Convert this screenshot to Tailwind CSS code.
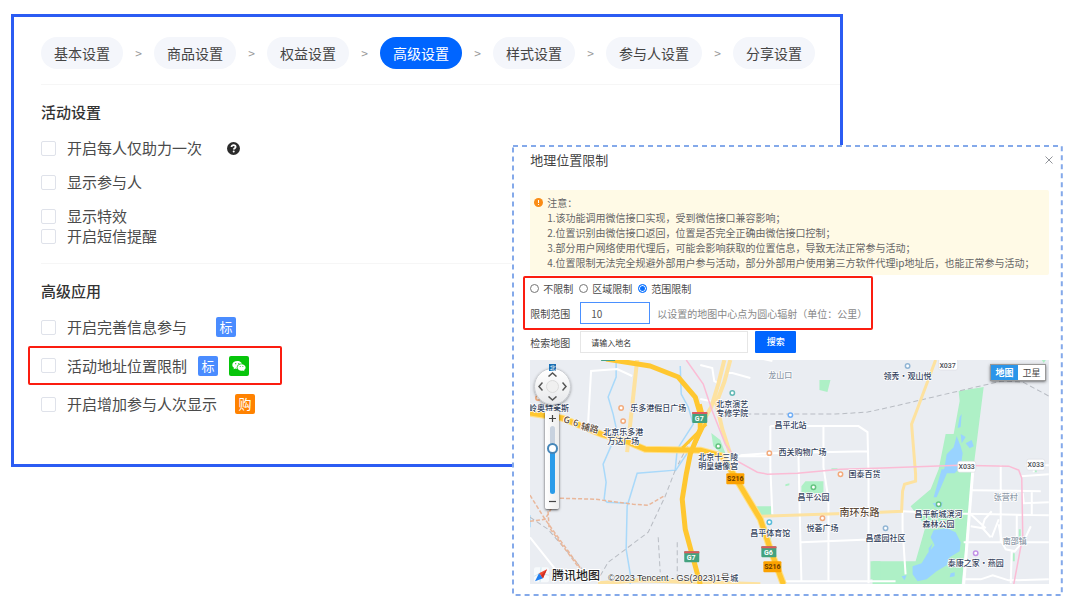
<!DOCTYPE html>
<html lang="zh-CN">
<head>
  <meta charset="UTF-8">
  <meta name="viewport" content="width=device-width, initial-scale=1">
  <title>高级设置</title>
  <script src="https://cdn.jsdelivr.net/npm/@tailwindcss/browser@4"></script>
</head>
<body class="relative min-h-screen bg-white text-[#4a4a4a] font-['Noto_Sans_CJK_SC',sans-serif]">

<!-- Settings panel -->
<main class="w-[77%] ml-[11px] mt-[14px] border-3 border-[#2b5cf3] pl-[27px] pb-[33px]">
  <!-- Steps -->
  <nav class="flex items-center pt-5 pb-[15px] border-b border-[#f6f6f6] text-sm leading-8 text-[#444] whitespace-nowrap">
    <button class="h-8 px-[13px] rounded-full bg-[#f4f6fb]">基本设置</button>
    <span class="w-[31px] text-center text-xs text-[#999]">&gt;</span>
    <button class="h-8 px-[13px] rounded-full bg-[#f4f6fb]">商品设置</button>
    <span class="w-[31px] text-center text-xs text-[#999]">&gt;</span>
    <button class="h-8 px-[13px] rounded-full bg-[#f4f6fb]">权益设置</button>
    <span class="w-[31px] text-center text-xs text-[#999]">&gt;</span>
    <button class="h-8 px-[13px] rounded-full bg-[#0065ff] text-white" aria-current="step">高级设置</button>
    <span class="w-[31px] text-center text-xs text-[#999]">&gt;</span>
    <button class="h-8 px-[13px] rounded-full bg-[#f4f6fb]">样式设置</button>
    <span class="w-[31px] text-center text-xs text-[#999]">&gt;</span>
    <button class="h-8 px-[13px] rounded-full bg-[#f4f6fb]">参与人设置</button>
    <span class="w-[31px] text-center text-xs text-[#999]">&gt;</span>
    <button class="h-8 px-[13px] rounded-full bg-[#f4f6fb]">分享设置</button>
  </nav>

  <!-- Activity settings -->
  <section class="py-[17px] border-b border-[#f6f6f6] text-[15px] leading-5">
    <h2 class="font-medium text-[#333] mb-4">活动设置</h2>
    <div class="flex items-center gap-[25px] mb-3.5">
      <label class="flex items-center gap-[11px]">
        <input type="checkbox" class="appearance-none size-[15px] border border-[#dfe2ea] rounded-xs checked:bg-[#0065ff]">开启每人仅助力一次
      </label>
      <svg class="size-[13px]" viewBox="0 0 13 13" fill="none">
        <circle cx="6.5" cy="6.5" r="6.5" fill="#2b2b2b"/>
        <path d="M4.5 5.1c0-1.2.9-2 2.1-2s2 .8 2 1.8c0 1.300-1.800 1.400-1.800 2.700" stroke="#fff" stroke-width="1.800"/>
        <circle cx="6.700" cy="9.600" r="1" fill="#fff"/>
      </svg>
    </div>
    <label class="flex w-fit items-center gap-[11px] mb-3.5">
      <input type="checkbox" class="appearance-none size-[15px] border border-[#dfe2ea] rounded-xs checked:bg-[#0065ff]">显示参与人
    </label>
    <label class="flex w-fit items-center gap-[11px]">
      <input type="checkbox" class="appearance-none size-[15px] border border-[#dfe2ea] rounded-xs checked:bg-[#0065ff]">显示特效
    </label>
    <label class="flex w-fit items-center gap-[11px]">
      <input type="checkbox" class="appearance-none size-[15px] border border-[#dfe2ea] rounded-xs checked:bg-[#0065ff]">开启短信提醒
    </label>
  </section>

  <!-- Advanced apps -->
  <section class="py-[17px] text-[15px] leading-5">
    <h2 class="font-medium text-[#333] mb-4">高级应用</h2>
    <div class="flex items-center gap-[29px]">
      <label class="flex items-center gap-[11px]">
        <input type="checkbox" class="appearance-none size-[15px] border border-[#dfe2ea] rounded-xs checked:bg-[#0065ff]">开启完善信息参与
      </label>
      <span class="size-5 rounded-xs bg-[#4a8cff] text-white text-[13px] leading-5 text-center">标</span>
    </div>
    <div class="flex items-center gap-[11px] w-[254px] h-[39px] -ml-[13px] mt-[9px] mb-[9px] pl-[11px] border-2 border-[#fb1d10] rounded-xs">
      <label class="flex items-center gap-[11px]">
        <input type="checkbox" class="appearance-none size-[15px] border border-[#dfe2ea] rounded-xs checked:bg-[#0065ff]">活动地址位置限制
      </label>
      <span class="size-5 rounded-xs bg-[#4a8cff] text-white text-[13px] leading-5 text-center">标</span>
      <svg class="size-5" viewBox="0 0 20 20">
        <rect width="20" height="20" rx="2" fill="#07c50b"/>
        <path d="M8.300 5C5.500 5 3.300 6.700 3.300 8.900c0 1.200.7 2.200 1.700 2.900l-.4 1.400 1.700-.8c.7.200 1.300.3 2 .3 2.800 0 5-1.700 5-3.800S11.100 5 8.300 5z" fill="#fff"/>
        <ellipse cx="12.500" cy="11.500" rx="4.800" ry="3.900" fill="#07c50b"/>
        <path d="M12.500 8.300c-2.300 0-4.100 1.400-4.100 3.200s1.800 3.200 4.100 3.200c.5 0 1-.1 1.500-.2l1.400.7-.3-1.200c.9-.6 1.500-1.500 1.500-2.500 0-1.800-1.800-3.200-4.100-3.200z" fill="#fff"/>
        <g fill="#07c50b"><circle cx="6.700" cy="7.700" r=".6"/><circle cx="9.800" cy="7.500" r=".6"/><circle cx="11.200" cy="10.600" r=".5"/><circle cx="13.900" cy="10.600" r=".5"/></g>
      </svg>
    </div>
    <div class="flex items-center gap-[18px]">
      <label class="flex items-center gap-[11px]">
        <input type="checkbox" class="appearance-none size-[15px] border border-[#dfe2ea] rounded-xs checked:bg-[#0065ff]">开启增加参与人次显示
      </label>
      <span class="size-5 rounded-xs bg-[#ff8200] text-white text-[13px] leading-5 text-center">购</span>
    </div>
  </section>
</main>

<!-- Location dialog -->
<div role="dialog" aria-labelledby="dialogTitle" class="absolute top-[145px] right-[17px] w-[51%] bg-white pt-[5px] pb-3 pl-[18px] pr-3.5 text-[10px] text-[#4a4a4a]">
  <svg class="absolute inset-px w-[calc(100%-2px)] h-[calc(100%-2px)] overflow-visible pointer-events-none">
    <rect width="100%" height="100%" fill="none" stroke="#84a9ea" stroke-width="2" stroke-dasharray="5 4"/>
  </svg>

  <div class="flex items-center justify-between h-5">
    <h2 id="dialogTitle" class="text-[13px] leading-5 text-[#444]">地理位置限制</h2>
    <button class="-mr-[5px] p-px" aria-label="关闭">
      <svg class="size-2" viewBox="0 0 8 8"><path d="M.5.5l7 7M7.500.5l-7 7" stroke="#909399" fill="none"/></svg>
    </button>
  </div>

  <div class="flex gap-1 mt-5 py-[5px] pl-1 rounded-xs bg-[#fffae6] leading-[15px] text-[#666]">
    <svg class="size-[9px] mt-[3px]" viewBox="0 0 9 9">
      <circle cx="4.500" cy="4.500" r="4.500" fill="#fa8c16"/>
      <path d="M4.500 2v3M4.500 6v1" stroke="#fff" fill="none"/>
    </svg>
    <div class="whitespace-nowrap">
      <p>注意：</p>
      <ul>
        <li>1.该功能调用微信接口实现，受到微信接口兼容影响；</li>
        <li>2.位置识别由微信接口返回，位置是否完全正确由微信接口控制；</li>
        <li>3.部分用户网络使用代理后，可能会影响获取的位置信息，导致无法正常参与活动；</li>
        <li>4.位置限制无法完全规避外部用户参与活动，部分外部用户使用第三方软件代理ip地址后，也能正常参与活动；</li>
      </ul>
    </div>
  </div>

  <!-- Range limit -->
  <div class="w-[350px] -ml-[7px] mt-px pl-[5px] pb-1 border-2 border-[#fb1d10] rounded-xs">
    <div class="flex items-center gap-1.5 h-5">
      <label class="flex items-center gap-1"><input type="radio" name="limit" class="appearance-none size-[9px] rounded-full border border-[#767676] checked:border-[#0b72ff] checked:bg-[#0b72ff] checked:shadow-[inset_0_0_0_1px_#fff]">不限制</label>
      <label class="flex items-center gap-1"><input type="radio" name="limit" class="appearance-none size-[9px] rounded-full border border-[#767676] checked:border-[#0b72ff] checked:bg-[#0b72ff] checked:shadow-[inset_0_0_0_1px_#fff]">区域限制</label>
      <label class="flex items-center gap-1"><input type="radio" name="limit" checked class="appearance-none size-[9px] rounded-full border border-[#767676] checked:border-[#0b72ff] checked:bg-[#0b72ff] checked:shadow-[inset_0_0_0_1px_#fff]">范围限制</label>
    </div>
    <div class="flex items-center mt-1">
      <label for="range" class="w-[50px]">限制范围</label>
      <input id="range" type="text" value="10" class="w-[70px] h-[22px] pl-2.5 border border-[#4a90ff] text-[#555]">
      <span class="ml-[7px] text-[#888]">以设置的地图中心点为圆心辐射（单位：公里）</span>
    </div>
  </div>

  <div class="flex items-center mt-px">
    <label for="search" class="w-[50px]">检索地图</label>
    <input id="search" type="text" placeholder="请输入地名" class="w-[168px] h-[22px] pl-2.5 border border-[#e6e6e6] text-[8px] placeholder:text-[#333]">
    <button class="w-[41px] h-[22px] ml-[7px] rounded-[1px] bg-[#0065ff] text-white text-[9px] font-medium">搜索</button>
  </div>

  <!-- Map -->
  <div class="relative h-[224px] mt-[7px] overflow-hidden">
    <svg class="block w-full h-full" viewBox="530 361 518 224" preserveAspectRatio="xMinYMin slice">
      <rect x="530" y="360" width="520" height="226" fill="#eaedf2"/>

      <!-- parks -->
      <g fill="#aef0c6">
        <path d="M958 392L983 388L972 475L961 585H872V562H915L925 527L910 507L930 490L938 470L945 435H953L959 402z"/>
        <path d="M819 381H830L827 393L819 391zM711 434L720 441L727 459L713 447zM805 482H823V494H801V487zM755 507H771V516H760zM870 562H880V580H870zM785 485L789 484V486L785 487zM1041 361H1045L1043 364zM1018 530H1020V538H1018zM1012 554H1014V562H1012zM764 524L770 534L771 543L766 537zM831 469H837V471H831zM1033 470H1036V473H1033z"/>
      </g>
      <!-- water -->
      <g fill="#99d3ff">
        <path d="M961 415L960 428L957 429L959 418zM956 437L960 447L962 454L960 468L954 474H943L946 455L953 448zM941 470H948L936 498H933zM960 435L965 438L961 444zM965 444L971 441L973 447L969 449z"/>
        <path d="M933 531L946 529L955 533L960 543L959 552L949 558L946 566L936 572L926 580L917 582L912 575L912 567L921 564L927 554L934 546L930 538zM901 577L906 576L904 581zM928 549L932 544L928 557zM950 574L954 573V577L949 578zM932 504L942 503L941 508L935 508z"/>
      </g>
      <g fill="none" stroke="#a9d9fa" stroke-width="1.500">
        <path d="M616 361V378L608 398L613 415L617 433L603 465L606 483L604 500L607 503L627 504"/>
        <path d="M680 367L681 395L688 408L693 425L677 450L675 471L637 474L627 507L626 550L630 574V585M675 472L691 448"/>
        <path d="M530 516V528"/>
      </g>

      <!-- local roads -->
      <g fill="none" stroke="#fff" stroke-width="2">
        <path d="M632 377L617 370L591 372L588 424M530 538L557 572"/>
        <path d="M727 374L732 374L750 379M763 360L772 362M700 366L712 369L714 382L718 384M700 400L710 402"/>
        <path d="M770 427H858L867 433L868 475V584M823 426V468L828 500V583M740 456L770 454L868 452M770 427V470L772 515M798 455L799 500L801 582M801 543L875 540M780 582H895M735 457H770"/>
        <path d="M902 512L940 514L1048 516M963 543H1048M971 491L1040 492M1000 466V543M1016 516V543M1022 494L1023 504L1048 503M1031 492V516M1020 477L1048 475M1033 473V466M1025 466H1048"/>
        <path d="M970 527L982 529L990 538M981 530L984 520L991 512M991 538L998 520M970 515L985 529M998 525L1001 543L1005 550L1014 552L1024 540L1030 527M1011 552L1010 584M963 580H980L992 576L1008 581L1048 580M902 512V530L905 575"/>
      </g>
      <path d="M972 473L963 585" fill="none" stroke="#fff" stroke-width="3"/>

      <!-- railways -->
      <g fill="none" stroke="#b8bcc3" stroke-width="1" stroke-dasharray="5 3">
        <path d="M675 471L665 497L648 533L608 563L598 580M658 538L660 573M677 543V580M530 518L548 530L585 573M691 440L678 465"/>
        <path d="M722 417L745 415H835L867 413L890 408L958 392L1001 382L1022 383L1048 397"/>
      </g>
      <g fill="none" stroke="#e9b79b" stroke-width="1.500" stroke-dasharray="4 2">
        <path d="M560 499L595 500L633 505L648 506L665 496M530 496L545 520L582 571M530 522L545 520L552 508M548 512L549 528L580 570"/>
      </g>

      <!-- main roads -->
      <g fill="none" stroke="#fde2a0" stroke-width="4">
        <path d="M637 361L627 453"/>
        <path d="M724 361L718 385L711 408L703 422M730 361L724 383L716 404L722 430L730 455"/>
        <path d="M760 517L880 513L901 512L902 492L904 485L915 482V475L911 425L916 412L935 361" stroke-width="3"/>
        <path d="M598 584L640 581L760 585"/>
      </g>
      <path d="M686 361L703 385L712 412L725 445L737 462L757 473L767 475L797 474L840 470L875 469L958 466L1008 467L1018 471L1021 479L1022 537L1013 585" fill="none" stroke="#fbbcd5" stroke-width="1.500"/>
      <g fill="none" stroke="#ffe08a" stroke-width="7" stroke-linejoin="round">
        <path d="M530 414L562 419L601 435L628 443L645 450L700 451L722 457L733 475L745 495L760 520L770 550L783 585"/>
      </g>
      <g fill="none" stroke="#ffc730" stroke-width="5" stroke-linejoin="round">
        <path d="M606 360L650 367L678 378L695 398L700 415V430L690 455L686 475L682 500L685 530L697 574L700 585"/>
        <path d="M530 414L562 419L601 435L628 443L645 450L700 451L722 457L733 475L745 495L760 520L770 550L783 585"/>
        <path d="M706 425L682 449M700 405L705 424L693 449" stroke-width="3"/>
      </g>
      <rect x="601" y="360" width="14" height="2" fill="#4aa283"/>

      <!-- road signs -->
      <g font-family="Roboto, sans-serif" font-size="7" font-weight="700" text-anchor="middle">
        <g fill="#44a27f">
          <rect x="692" y="413" width="15" height="11" rx="1"/><rect x="684" y="552" width="15" height="11" rx="1"/><rect x="761" y="547" width="15" height="11" rx="1"/>
        </g>
        <path d="M692 413h15v2h-15zM684 552h15v2h-15zM761 547h15v2h-15z" fill="#e0595b"/>
        <g fill="#fff"><text x="699" y="422">G7</text><text x="691" y="561">G7</text><text x="768" y="556">G6</text></g>
        <g fill="#fba100"><rect x="726" y="474" width="18" height="11" rx="1"/><rect x="763" y="562" width="18" height="11" rx="1"/></g>
        <g fill="#6b3b00"><text x="735" y="482">S216</text><text x="772" y="570">S216</text></g>
        <g fill="#fff" stroke="#d4d7dc" stroke-width=".5"><rect x="938" y="360" width="19" height="11" rx="2"/><rect x="957" y="462" width="18" height="11" rx="2"/><rect x="1026" y="460" width="18" height="11" rx="2"/></g>
        <g fill="#4b4f57" font-weight="500"><text x="947" y="369">X037</text><text x="966" y="470">X033</text><text x="1035" y="468">X033</text></g>
      </g>

      <!-- points of interest -->
      <g fill="#fff" stroke-width="1.500">
        <g stroke="#f3ab7c"><circle cx="621" cy="409" r="2.200"/><circle cx="623" cy="422" r="2.200"/><circle cx="769" cy="454" r="2.200"/><circle cx="840" cy="475" r="2.200"/><circle cx="822" cy="519" r="2.200"/><circle cx="538" cy="399" r="2.200"/></g>
        <g stroke="#62b8b5"><circle cx="732" cy="394" r="2.200"/></g>
        <g stroke="#71aef5"><circle cx="790" cy="416" r="2.200"/></g>
        <g stroke="#58bddb"><circle cx="769" cy="523" r="2.200"/></g>
        <g stroke="#65c280"><circle cx="718" cy="447" r="2.200"/><circle cx="813" cy="488" r="2.200"/><circle cx="938" cy="505" r="2.200"/></g>
        <g stroke="#91b5d4"><circle cx="907" cy="367" r="2.200"/><circle cx="885" cy="529" r="2.200"/></g>
        <g stroke="#c391e6"><circle cx="975" cy="554" r="2.200"/></g>
      </g>

      <!-- labels -->
      <g font-family="Noto Sans CJK SC, sans-serif" font-size="8" font-weight="500" text-anchor="middle" fill="#34435d" stroke="#fff" stroke-width="1.500" stroke-linejoin="round" paint-order="stroke">
        <text x="549" y="412">岭奥特莱斯</text>
        <text x="658" y="412">乐多港假日广场</text>
        <text x="623" y="436">北京乐多港</text>
        <text x="623" y="445">万达广场</text>
        <text x="732" y="408">北京演艺</text>
        <text x="732" y="417">专修学院</text>
        <text x="790" y="429">昌平北站</text>
        <text x="718" y="461">北京十三陵</text>
        <text x="718" y="470">明皇蜡像宫</text>
        <text x="802" y="456">西关购物广场</text>
        <text x="864" y="478">国泰百货</text>
        <text x="813" y="501">昌平公园</text>
        <text x="770" y="537">昌平体育馆</text>
        <text x="822" y="532">悦荟广场</text>
        <text x="885" y="542">昌盛园社区</text>
        <text x="938" y="518">昌平新城滨河</text>
        <text x="938" y="528">森林公园</text>
        <text x="975" y="567">泰康之家•燕园</text>
        <text x="907" y="380">领秀•观山悦</text>
        <text x="734" y="582">城</text>
        <g fill="#8d99a8"><text x="780" y="379">龙山口</text><text x="1005" y="501">张营村</text><text x="1014" y="545">南邵镇</text></g>
        <g fill="#5c4b3b" font-size="10"><text x="859" y="517">南环东路</text></g>
        <g fill="#5c4b3b" font-size="9">
          <text transform="translate(566 424) rotate(14)">G</text><text transform="translate(575 427) rotate(14)">6</text><text transform="translate(589 432) rotate(14)">辅路</text>
        </g>
      </g>

      <!-- logo and copyright -->
      <g>
        <rect x="534" y="568" width="15" height="15" rx="2" fill="#f7fafc"/>
        <path d="M534 577l6-3 9 2M541 568l-1 15" stroke="#cfe6ef" fill="none"/>
        <path d="M547 570L539 574L543 579z" fill="#f04a31"/>
        <path d="M535 582L539 574L543 579z" fill="#1f7ff0"/>
        <path d="M547 570L541 576.500L543 579z" fill="#cf2d20"/>
        <text x="552" y="581" font-family="Noto Sans CJK SC, sans-serif" font-size="12" font-weight="500" fill="#222" stroke="#fff" stroke-width="2" paint-order="stroke">腾讯地图</text>
        <text x="608" y="582" font-family="Liberation Sans, Noto Sans CJK SC, sans-serif" font-size="9" fill="#333" stroke="#fff" stroke-width="1" paint-order="stroke">©2023 Tencent - GS(2023)1号</text>
      </g>
    </svg>

    <!-- Pan control -->
    <div class="absolute left-1 top-2 size-[37px] rounded-full border border-[#c9ccd1] bg-linear-to-b from-white to-[#e8e9eb] shadow-sm shadow-black/30">
      <span class="absolute left-[11px] top-[11px] size-[13px] rounded-full border border-[#dcdcdc] bg-[#f0f0f0]"></span>
      <button aria-label="向上" class="absolute left-[13px] top-[3px]"><svg class="block w-[9px] h-[5px]" viewBox="0 0 9 5" fill="none" stroke="#555" stroke-width="1.500"><path d="M.5 4.500L4.500 1L8.500 4.500"/></svg></button>
      <button aria-label="向下" class="absolute left-[13px] bottom-[3px]"><svg class="block w-[9px] h-[5px]" viewBox="0 0 9 5" fill="none" stroke="#555" stroke-width="1.500"><path d="M.5.5L4.500 4L8.500.5"/></svg></button>
      <button aria-label="向左" class="absolute left-[3px] top-[13px]"><svg class="block w-[5px] h-[9px]" viewBox="0 0 5 9" fill="none" stroke="#555" stroke-width="1.500"><path d="M4.500.5L1 4.500L4.500 8.500"/></svg></button>
      <button aria-label="向右" class="absolute right-[3px] top-[13px]"><svg class="block w-[5px] h-[9px]" viewBox="0 0 5 9" fill="none" stroke="#555" stroke-width="1.500"><path d="M.5.5L4 4.500L.5 8.500"/></svg></button>
    </div>
    <span class="absolute left-[19px] top-1 size-[7px] bg-[#1b6fb3] text-white text-[6px] leading-[7px] text-center">北</span>

    <!-- Zoom control -->
    <div class="absolute left-[15px] top-[51px] flex flex-col items-center w-[14px] h-[98px] rounded-xs bg-linear-to-r from-white to-[#ededed] shadow-sm shadow-black/60">
      <button aria-label="放大" class="flex items-center justify-center h-[15px]"><svg class="size-[7px]" viewBox="0 0 7 7"><path d="M0 3.500h7M3.500 0v7" stroke="#444" stroke-width="1.200"/></svg></button>
      <input type="range" aria-label="缩放级别" min="0" max="20" value="14" class="appearance-none block w-[11px] h-[68px] [writing-mode:vertical-lr] [direction:rtl] bg-transparent [&::-webkit-slider-runnable-track]:w-[5px] [&::-webkit-slider-runnable-track]:rounded-full [&::-webkit-slider-runnable-track]:bg-linear-to-t [&::-webkit-slider-runnable-track]:from-[#2b9ce9] [&::-webkit-slider-runnable-track]:from-65% [&::-webkit-slider-runnable-track]:to-[#c8d2df] [&::-webkit-slider-runnable-track]:to-65% [&::-webkit-slider-thumb]:appearance-none [&::-webkit-slider-thumb]:size-[11px] [&::-webkit-slider-thumb]:-ml-[3px] [&::-webkit-slider-thumb]:rounded-full [&::-webkit-slider-thumb]:border-2 [&::-webkit-slider-thumb]:border-[#4686b8] [&::-webkit-slider-thumb]:bg-white">
      <button aria-label="缩小" class="flex items-center justify-center h-[15px]"><svg class="size-[7px]" viewBox="0 0 7 7"><path d="M0 3.500h7" stroke="#444" stroke-width="1.200"/></svg></button>
    </div>

    <!-- Map type -->
    <div class="absolute top-1 right-[3px] flex h-[17px] border border-[#999] bg-white text-[9px] leading-[15px] shadow-sm shadow-black/40">
      <button class="w-[27px] bg-[#2b95e9] text-white font-bold">地图</button>
      <button class="w-[27px] text-[#444]">卫星</button>
    </div>
  </div>
</div>

</body>
</html>
